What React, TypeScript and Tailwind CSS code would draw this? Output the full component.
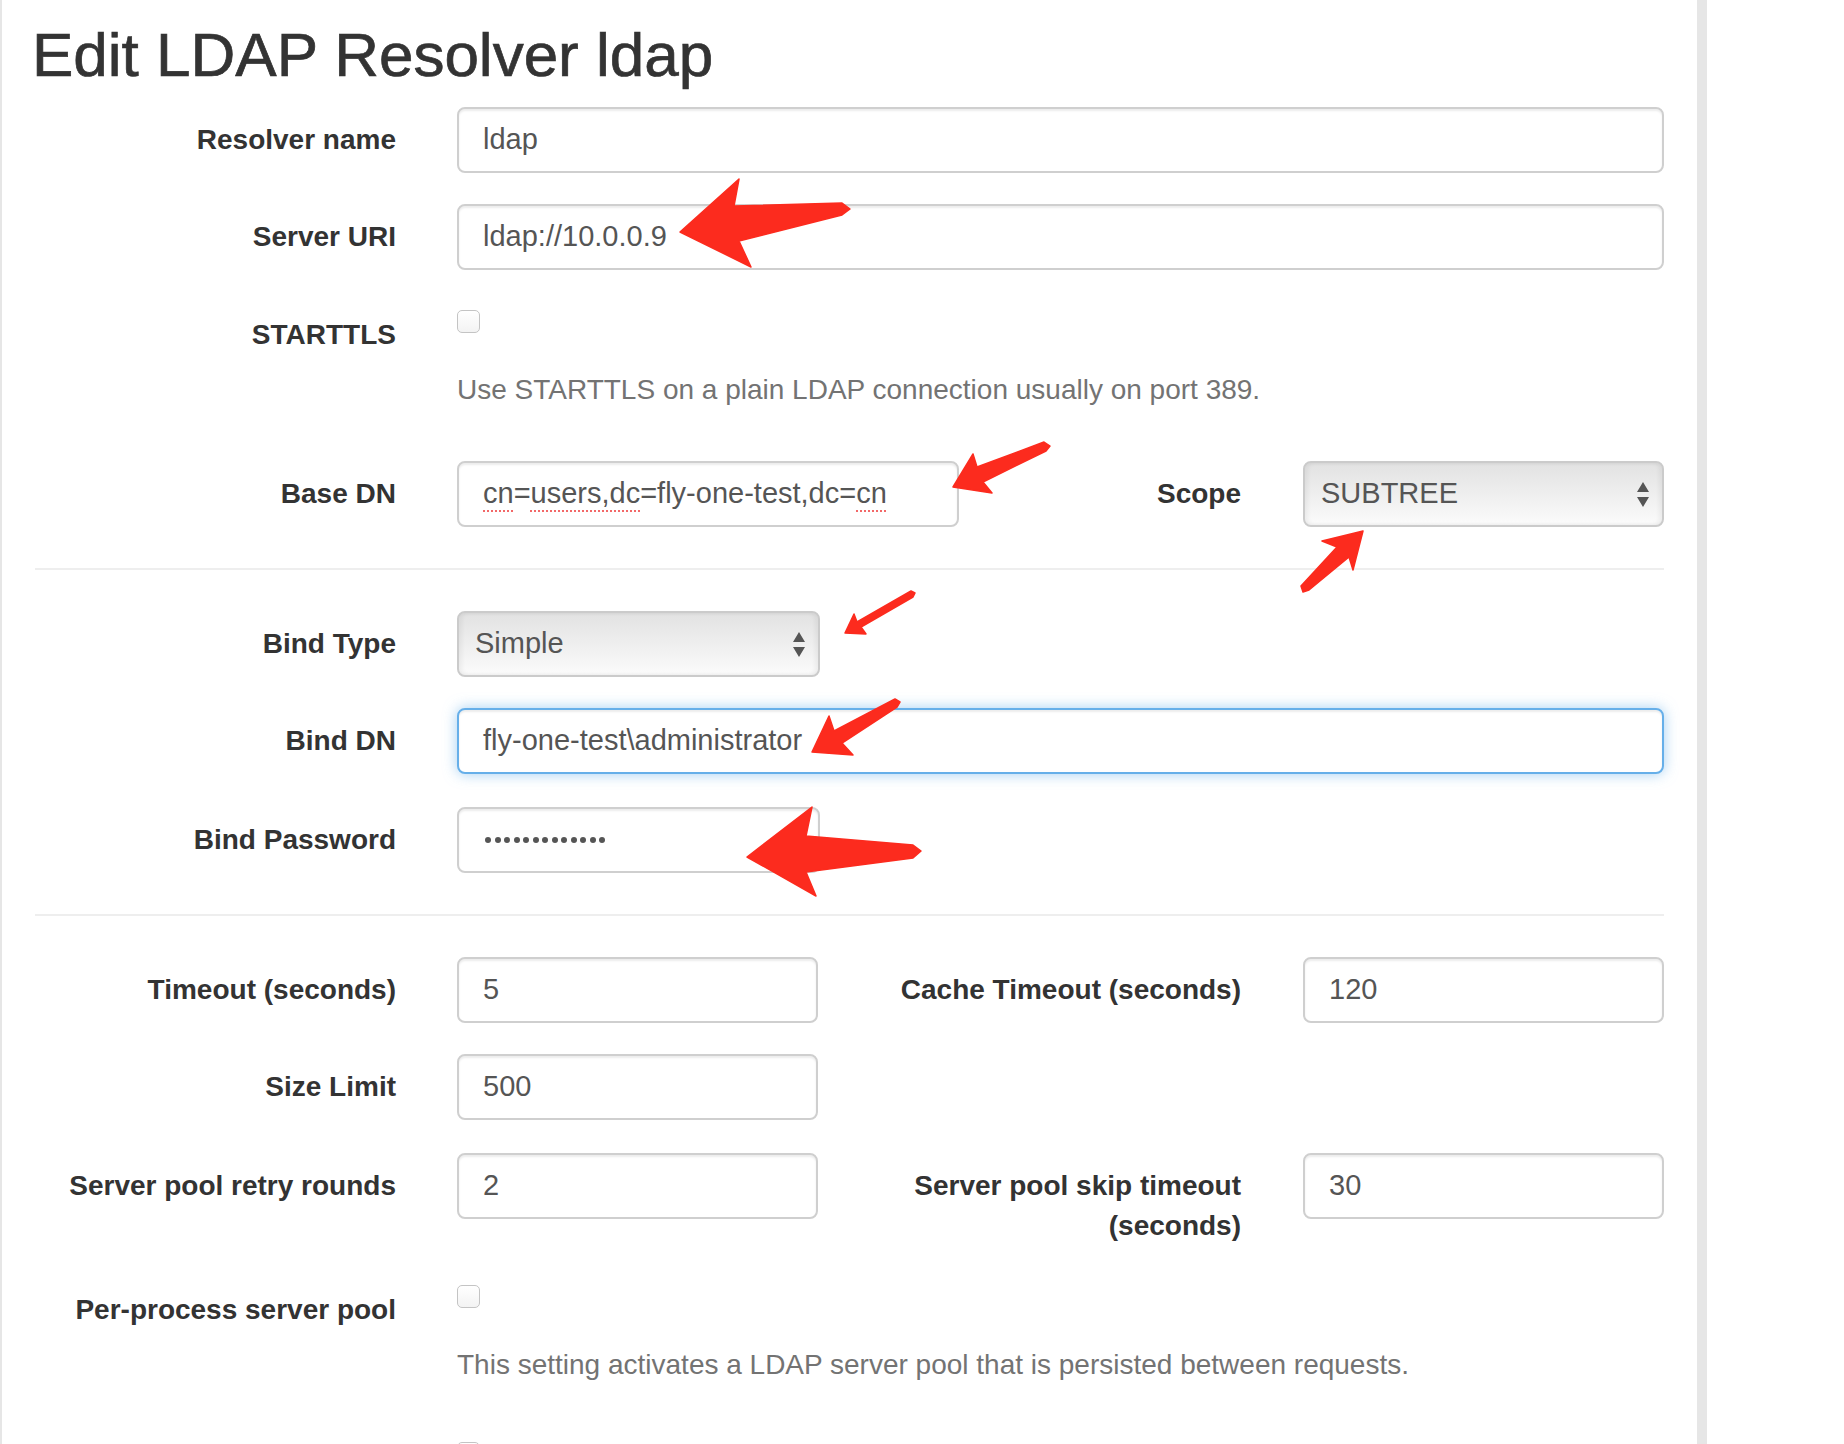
import React from "react";

const LABEL =
  "text-right text-[28px] font-bold leading-[40px] text-[#333] whitespace-nowrap";

// markup arrows drawn over the form (tip first, then barbs and the tapered tail)
const ARROWS = [
  "680,232 739,179 734,206 842,203 850,209 842,215 739,241 751,267",
  "953,487 973,454 977,467 1044,442 1050,446 1046,451 983,482 992,493",
  "1363,531 1322,541 1337,547 1301,586 1303,592 1309,590 1349,557 1353,570",
  "845,633 854,614 857,622 911,591 915,593 913,597 861,627 866,634",
  "812,752 829,716 834,731 895,699 900,702 897,707 842,743 853,755",
  "747,857 812,807 806,836 913,845 921,851 913,858 806,872 816,896",
];

function TextBox({
  children,
  focus = false,
  className = "",
}: {
  children: React.ReactNode;
  focus?: boolean;
  className?: string;
}) {
  return (
    <div
      className={`flex h-[66px] items-center rounded-[8px] border-2 bg-white pl-[24px] text-[29px] text-[#555] whitespace-nowrap ${
        focus
          ? "border-[#66afe9] shadow-[inset_0_2px_2px_rgba(0,0,0,0.075),0_0_14px_rgba(102,175,233,0.6)]"
          : "border-[#cfcfcf] shadow-[inset_0_2px_2px_rgba(0,0,0,0.075)]"
      } ${className}`}
    >
      {children}
    </div>
  );
}

function Select({ value, className = "" }: { value: string; className?: string }) {
  return (
    <div
      className={`flex h-[66px] items-center justify-between rounded-[8px] border-2 border-[#cbcbcb] bg-linear-to-b from-[#e2e2e2] to-[#fbfbfb] pl-[16px] pr-[13px] text-[29px] text-[#555] shadow-[inset_3px_0_4px_rgba(0,0,0,0.05),inset_-3px_0_4px_rgba(0,0,0,0.05)] ${className}`}
    >
      <span>{value}</span>
      <svg width="12" height="25" viewBox="0 0 12 25">
        <path d="M6 0 L12 10 L0 10 Z M0 15 L12 15 L6 25 Z" fill="#555" />
      </svg>
    </div>
  );
}

function Checkbox() {
  return (
    <div className="h-[23px] w-[23px] rounded-[5px] border border-[#c4c4c4] bg-linear-to-b from-white to-[#f3f3f3]" />
  );
}

function Row({
  label,
  children,
  className = "",
}: {
  label: React.ReactNode;
  children: React.ReactNode;
  className?: string;
}) {
  return (
    <div className={`flex ${className}`}>
      <label className={`w-[361px] shrink-0 pt-[13px] ${LABEL}`}>{label}</label>
      <div className="ml-[61px] flex-1">{children}</div>
    </div>
  );
}

function Pair({
  left,
  leftWidth = "w-[361px]",
  label,
  right,
}: {
  left: React.ReactNode;
  leftWidth?: string;
  label: React.ReactNode;
  right: React.ReactNode;
}) {
  return (
    <div className="flex">
      <div className={`${leftWidth} shrink-0`}>{left}</div>
      <div className={`flex-1 pt-[13px] ${LABEL}`}>{label}</div>
      <div className="ml-[62px] w-[361px] shrink-0">{right}</div>
    </div>
  );
}

const spell =
  "underline decoration-dotted decoration-[#f26868] decoration-2 underline-offset-[7px]";

export default function App() {
  return (
    <div className="relative flex h-[1444px] w-[1844px] overflow-hidden bg-white font-['Liberation_Sans',Arial,sans-serif]">
      <div className="w-[2px] shrink-0 bg-[#e6e6e6]" />
      <main className="w-[1695px] shrink-0 px-[33px]">
        <h1 className="mt-[21px] -ml-[3px] text-[62px] leading-[68px] text-[#333] whitespace-nowrap [-webkit-text-stroke:0.7px_#333]">
          Edit LDAP Resolver ldap
        </h1>

        <Row label="Resolver name" className="mt-[18px]">
          <TextBox>ldap</TextBox>
        </Row>

        <Row label="Server URI" className="mt-[31px]">
          <TextBox>ldap://10.0.0.9</TextBox>
        </Row>

        <Row label="STARTTLS" className="mt-[32px]">
          <div className="pt-[8px]">
            <Checkbox />
          </div>
          <p className="mt-[37px] text-[28px] leading-[40px] text-[#737373] whitespace-nowrap">
            Use STARTTLS on a plain LDAP connection usually on port 389.
          </p>
        </Row>

        <Row label="Base DN" className="mt-[51px]">
          <Pair
            leftWidth="w-[502px]"
            left={
              <TextBox>
                <span className={spell}>cn</span>=<span className={spell}>users,dc</span>
                =fly-one-test,dc=<span className={spell}>cn</span>
              </TextBox>
            }
            label="Scope"
            right={<Select value="SUBTREE" />}
          />
        </Row>

        <div className="mt-[41px] h-[2px] bg-[#eeeeee]" />

        <Row label="Bind Type" className="mt-[41px]">
          <Select value="Simple" className="w-[363px]" />
        </Row>

        <Row label="Bind DN" className="mt-[31px]">
          <TextBox focus>fly-one-test\administrator</TextBox>
        </Row>

        <Row label="Bind Password" className="mt-[33px]">
          <TextBox className="w-[363px]">
            <span className="flex gap-[3.5px] pl-[2px]" aria-label="password">
              {Array.from({ length: 13 }).map((_, i) => (
                <span key={i} className="h-[6px] w-[6px] rounded-full bg-[#555]" />
              ))}
            </span>
          </TextBox>
        </Row>

        <div className="mt-[41px] h-[2px] bg-[#eeeeee]" />

        <Row label="Timeout (seconds)" className="mt-[41px]">
          <Pair
            left={<TextBox>5</TextBox>}
            label="Cache Timeout (seconds)"
            right={<TextBox>120</TextBox>}
          />
        </Row>

        <Row label="Size Limit" className="mt-[31px]">
          <TextBox className="w-[361px]">500</TextBox>
        </Row>

        <Row label="Server pool retry rounds" className="mt-[33px]">
          <Pair
            left={<TextBox>2</TextBox>}
            label={
              <>
                Server pool skip timeout
                <br />
                (seconds)
              </>
            }
            right={<TextBox>30</TextBox>}
          />
        </Row>

        <Row label="Per-process server pool" className="mt-[31px]">
          <div className="pt-[8px]">
            <Checkbox />
          </div>
          <p className="mt-[37px] text-[28px] leading-[40px] text-[#737373] whitespace-nowrap">
            This setting activates a LDAP server pool that is persisted between requests.
          </p>
        </Row>

        <Row label="" className="mt-[49px]">
          <div className="pt-[8px]">
            <Checkbox />
          </div>
        </Row>
      </main>
      <div className="w-[10px] shrink-0 bg-[#e6e6e6]" />
      <div className="flex-1 bg-white" />

      <svg
        className="pointer-events-none absolute left-0 top-0"
        width={1844}
        height={1444}
        viewBox="0 0 1844 1444"
      >
        {ARROWS.map((pts) => (
          <polygon
            key={pts}
            points={pts}
            fill="#fc2b1e"
            stroke="#fc2b1e"
            strokeWidth={1.5}
            strokeLinejoin="round"
          />
        ))}
      </svg>
    </div>
  );
}
